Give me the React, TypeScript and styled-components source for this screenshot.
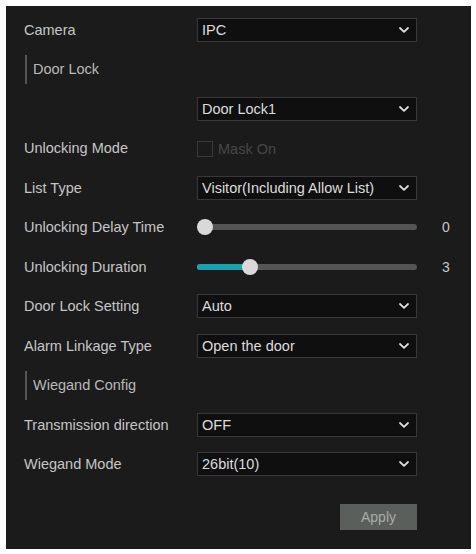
import React from "react";
import styled, { createGlobalStyle } from "styled-components";

const Global = createGlobalStyle`
  html, body { margin: 0; padding: 0; background: #ffffff; }
  body { font-family: "Liberation Sans", Arial, sans-serif; }
`;

const Page = styled.div`
  width: 476px;
  height: 554px;
  padding: 6px 5px 5px 6px;
  box-sizing: border-box;
`;

const Panel = styled.div`
  width: 465px;
  height: 543px;
  background: #1b1b1b;
  box-sizing: border-box;
  padding: 4px 0 0 18px;
  display: flex;
  flex-direction: column;
`;

const Form = styled.div`
  display: grid;
  grid-template-columns: 173px 220px auto;
  grid-auto-rows: 39.5px;
  align-items: center;
`;

const Label = styled.div`
  color: #c6c6c6;
  font-size: 14.5px;
  white-space: nowrap;
`;

const Header = styled.div`
  grid-column: 1 / -1;
  display: flex;
  align-items: center;
  gap: 6px;
  padding-left: 1px;
  color: #b9b9b9;
  font-size: 14.5px;
  &::before {
    content: "";
    width: 2px;
    height: 29px;
    background: #555555;
  }
`;

const SelectBox = styled.div`
  height: 24px;
  box-sizing: border-box;
  border: 1px solid #383838;
  background: #0f0f0f;
  display: flex;
  align-items: center;
  justify-content: space-between;
  padding: 0 7px 0 4px;
  color: #dcdcdc;
  font-size: 14.5px;
  white-space: nowrap;
`;

const Chevron = () => (
  <svg width="10" height="6" viewBox="0 0 10 6">
    <polyline points="1,1 5,4.8 9,1" fill="none" stroke="#dedede" strokeWidth="1.8" strokeLinecap="round" strokeLinejoin="round" />
  </svg>
);

const Select = ({ value }: { value: string }) => (
  <SelectBox>
    <span>{value}</span>
    <Chevron />
  </SelectBox>
);

const CheckWrap = styled.div`
  display: flex;
  align-items: center;
  gap: 5px;
  color: #474747;
  font-size: 14.5px;
  padding-top: 2px;
`;

const CheckBox = styled.span`
  width: 16px;
  height: 16px;
  box-sizing: border-box;
  border: 1px solid #3a3a3a;
  display: inline-block;
`;

const Track = styled.div`
  position: relative;
  height: 6px;
  border-radius: 3px;
  background: #555555;
`;

const Fill = styled.div`
  position: absolute;
  left: 0;
  top: 0;
  bottom: 0;
  border-radius: 3px 0 0 3px;
  background: #17a2b2;
`;

const Thumb = styled.div`
  position: absolute;
  top: 50%;
  width: 16px;
  height: 16px;
  margin: -8px 0 0 -8px;
  border-radius: 50%;
  background: #d9d9d9;
`;

const Value = styled.div`
  padding-left: 25px;
  color: #c6c6c6;
  font-size: 14px;
`;

const Slider = ({ value, max }: { value: number; max: number }) => {
  const travel = 220 - 16;
  const pos = 8 + (value / max) * travel;
  return (
    <Track>
      {value > 0 && <Fill style={{ width: pos }} />}
      <Thumb style={{ left: pos }} />
    </Track>
  );
};

const Footer = styled.div`
  display: flex;
  justify-content: flex-end;
  width: 393px;
  margin-top: 20px;
`;

const ApplyButton = styled.button`
  width: 77px;
  height: 26px;
  border: none;
  background: #5a5f5c;
  color: #a9aca9;
  font-family: "Liberation Sans", Arial, sans-serif;
  font-size: 14px;
  padding: 0;
`;

export default function App() {
  return (
    <>
      <Global />
      <Page>
        <Panel>
          <Form>
            <Label>Camera</Label>
            <Select value="IPC" />
            <div />

            <Header>Door Lock</Header>

            <div />
            <Select value="Door Lock1" />
            <div />

            <Label>Unlocking Mode</Label>
            <CheckWrap>
              <CheckBox />
              Mask On
            </CheckWrap>
            <div />

            <Label>List Type</Label>
            <Select value="Visitor(Including Allow List)" />
            <div />

            <Label>Unlocking Delay Time</Label>
            <Slider value={0} max={13.5} />
            <Value>0</Value>

            <Label>Unlocking Duration</Label>
            <Slider value={3} max={13.5} />
            <Value>3</Value>

            <Label>Door Lock Setting</Label>
            <Select value="Auto" />
            <div />

            <Label>Alarm Linkage Type</Label>
            <Select value="Open the door" />
            <div />

            <Header>Wiegand Config</Header>

            <Label>Transmission direction</Label>
            <Select value="OFF" />
            <div />

            <Label>Wiegand Mode</Label>
            <Select value="26bit(10)" />
            <div />
          </Form>
          <Footer>
            <ApplyButton>Apply</ApplyButton>
          </Footer>
        </Panel>
      </Page>
    </>
  );
}
